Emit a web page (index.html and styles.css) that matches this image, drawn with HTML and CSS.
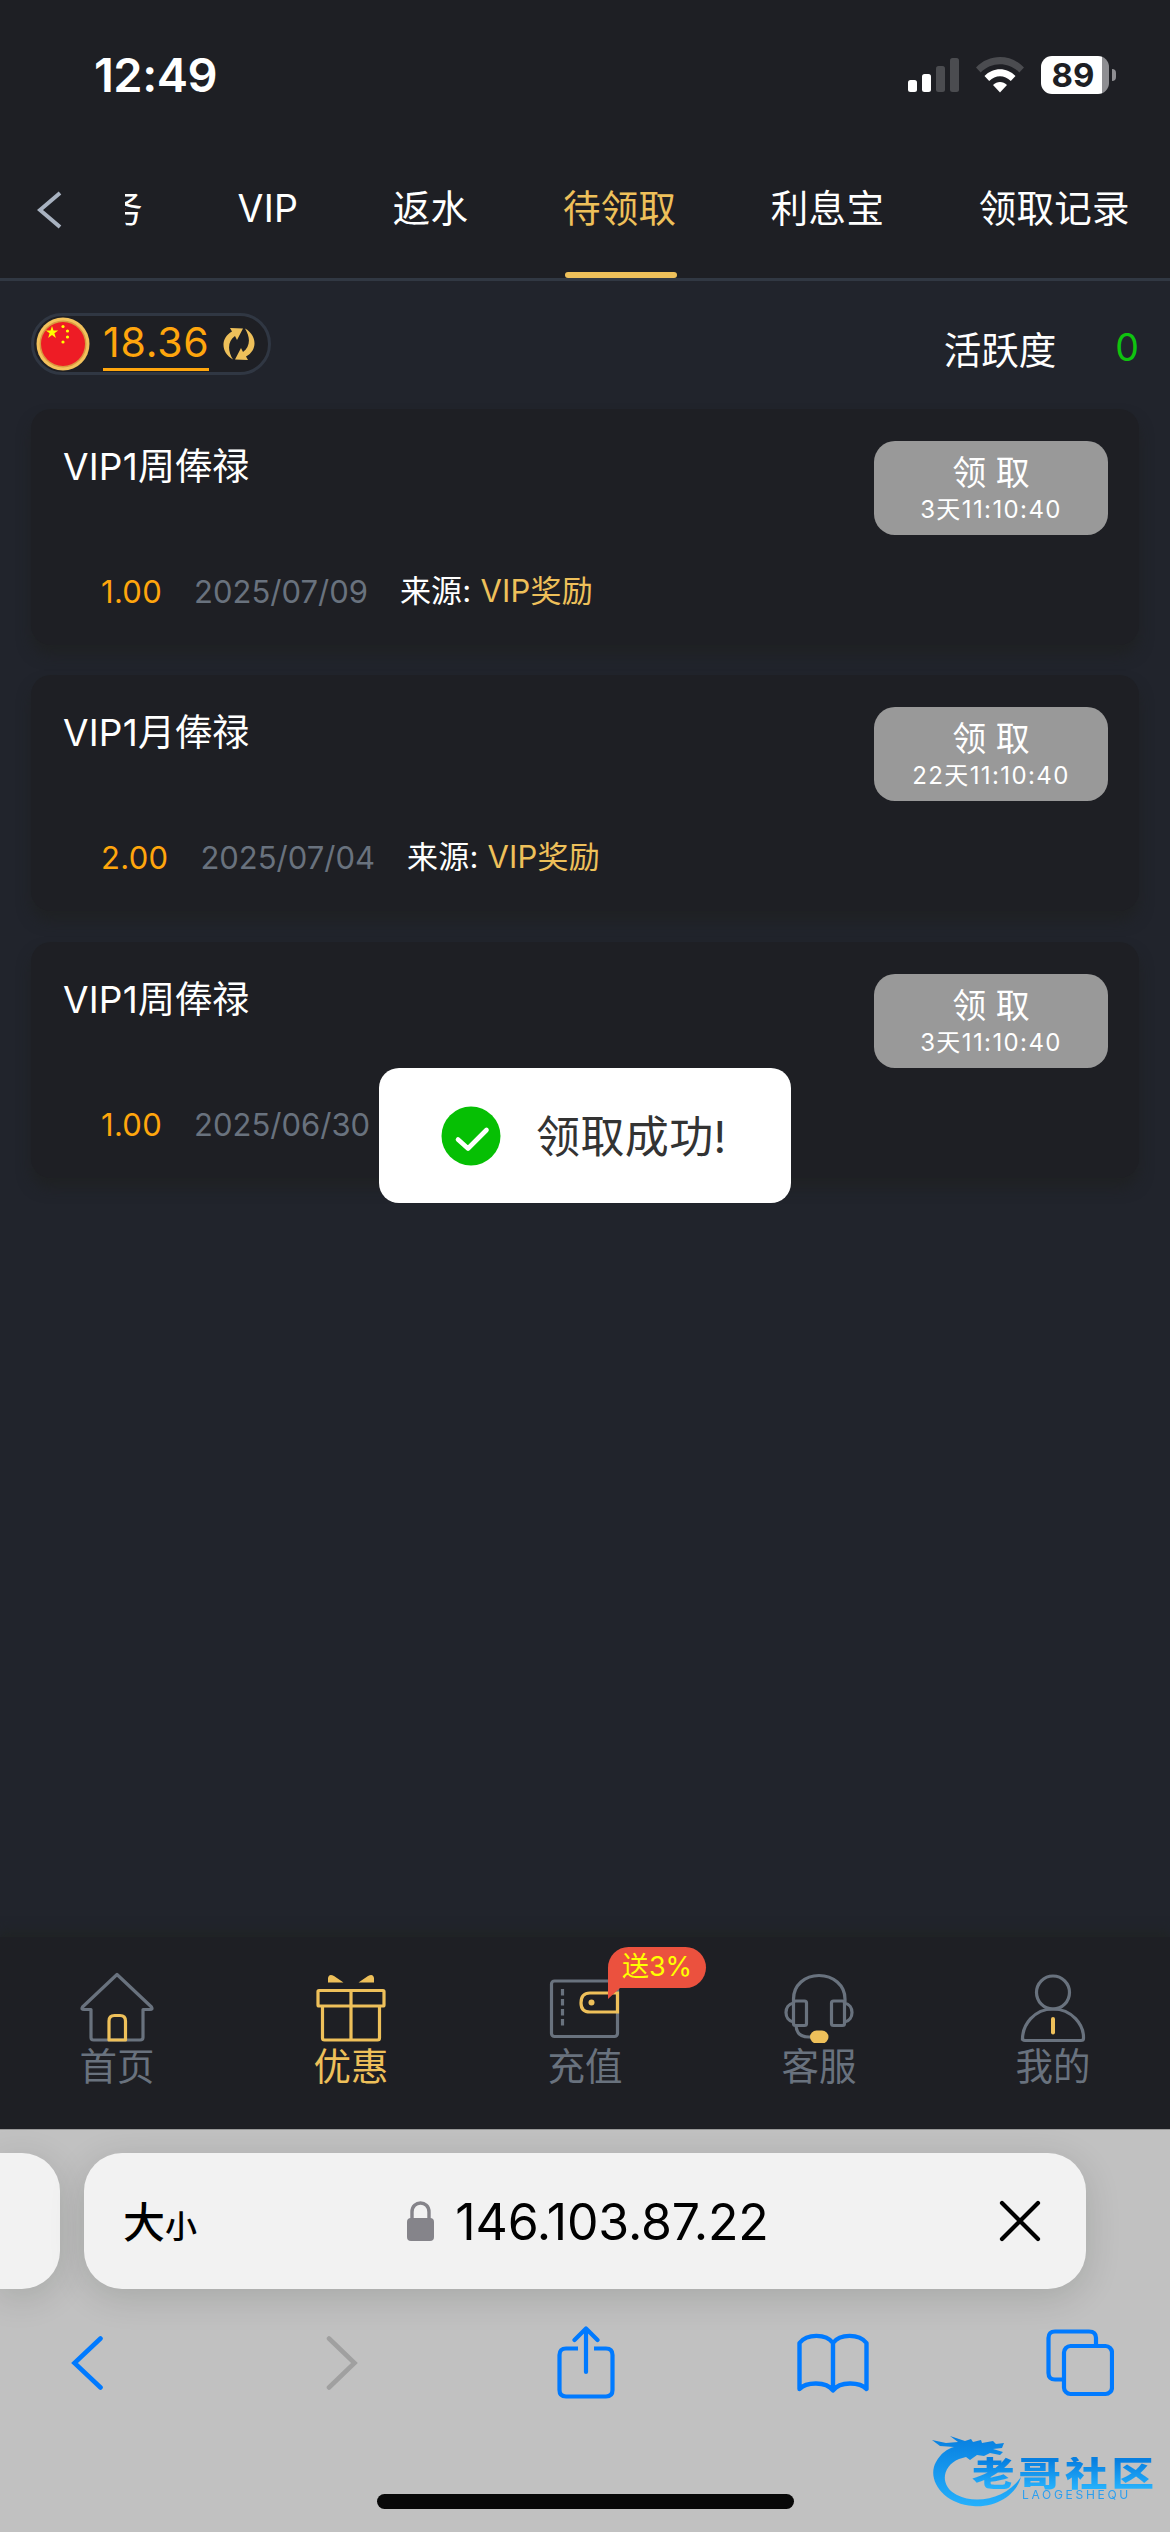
FILE: index.html
```html
<!DOCTYPE html>
<html lang="zh-CN">
<head>
<meta charset="utf-8">
<title>待领取</title>
<link rel="stylesheet" href="styles.css">
</head>
<body>
<div class="phone">
  <header class="status">
    <span class="clock">12:49</span>
    <div class="status-icons">
      <svg width="51" height="34" viewBox="0 0 51 34"><g fill="#fff"><rect x="0" y="22" width="9" height="12" rx="2.5"/><rect x="14" y="16" width="9" height="18" rx="2.5"/></g><g fill="#4b4c50"><rect x="28" y="8" width="9" height="26" rx="2.5"/><rect x="42" y="0" width="9" height="34" rx="2.5"/></g></svg>
      <svg class="wifi" width="48" height="36" viewBox="0 0 48 36"><path d="M0 10.500C13-3.500 35-3.500 48 10.500L43.300 15.500C32.500 4.500 15.500 4.500 4.700 15.500Z" fill="#4b4c50"/><path d="M8.500 19C17 10 31 10 39.500 19L34.800 24C28.500 17.500 19.500 17.500 13.200 24Z" fill="#fff"/><path d="M17 28C21 24 27 24 31 28L24 35.500Z" fill="#fff"/></svg>
      <div class="battery"><span>89</span></div><i class="nub"></i>
    </div>
  </header>

  <nav class="tabs">
    <svg class="back" width="25" height="38" viewBox="0 0 25 38"><path d="M23 2L3 19L23 36" fill="none" stroke="#a8b2c0" stroke-width="4"/></svg>
    <div class="tab-list">
      <span class="tab cut"><b>务</b></span>
      <span class="tab">VIP</span>
      <span class="tab">返水</span>
      <span class="tab active">待领取</span>
      <span class="tab">利息宝</span>
      <span class="tab">领取记录</span>
    </div>
  </nav>

  <main class="content">
    <div class="summary">
      <div class="wallet">
        <svg width="54" height="54" viewBox="0 0 54 54"><circle cx="27" cy="27" r="26.500" fill="#f3c25c"/><circle cx="27" cy="27" r="23.500" fill="#d9993f"/><circle cx="27" cy="27" r="22" fill="#ee1c25"/><g fill="#ff0"><path d="M16 9l1.500 4.500h4.700l-3.800 2.800 1.500 4.600-3.900-2.800-3.900 2.800 1.500-4.600-3.800-2.800h4.700z"/><circle cx="27" cy="9.500" r="1.600"/><circle cx="31.500" cy="14" r="1.600"/><circle cx="31.500" cy="20" r="1.600"/><circle cx="27" cy="25" r="1.600"/></g></svg>
        <span class="balance">18.36</span>
        <svg class="refresh" width="32" height="34" viewBox="0 0 32 34"><g fill="#eec05a"><path d="M7 1L20 1.500L14 13L12 9C5 14 4 23 10 32.500C-2 26-3 11 9 4.500Z"/><path d="M25 33L12 32.500L18 21L20 25C27 20 28 11 22 1.500C34 8 35 23 23 29.500Z"/></g></svg>
      </div>
      <div class="activity"><span>活跃度</span><em>0</em></div>
    </div>

    <section class="card">
      <div class="top"><h2>VIP1周俸禄</h2><div class="claim"><span>领 取</span><small>3天11:10:40</small></div></div>
      <div class="meta"><span class="amount">1.00</span><span class="date">2025/07/09</span><span class="source">来源: <em>VIP奖励</em></span></div>
    </section>
    <section class="card">
      <div class="top"><h2>VIP1月俸禄</h2><div class="claim"><span>领 取</span><small>22天11:10:40</small></div></div>
      <div class="meta"><span class="amount">2.00</span><span class="date">2025/07/04</span><span class="source">来源: <em>VIP奖励</em></span></div>
    </section>
    <section class="card">
      <div class="top"><h2>VIP1周俸禄</h2><div class="claim"><span>领 取</span><small>3天11:10:40</small></div></div>
      <div class="meta"><span class="amount">1.00</span><span class="date">2025/06/30</span></div>
    </section>
  </main>

  <nav class="bottom-nav">
    <div class="item"><svg width="76" height="72" viewBox="0 0 76 72" fill="none" stroke="#69727e" stroke-width="3.200" stroke-linejoin="round"><path d="M38 3.500L3.500 36Q2 38.500 5 38.500H12V66.500Q12 69 14.500 69H61Q64 69 64 66.500V38.500H71Q74 38.500 72.500 36Z"/><path d="M30 69V50Q30 44.500 35.500 44.500H41Q46.500 44.500 46.500 50V69Z" stroke="#eec05a"/></svg><span>首页</span></div>
    <div class="item on"><svg width="76" height="72" viewBox="0 0 76 72" fill="none" stroke="#eec05a" stroke-width="3.200" stroke-linejoin="round"><rect x="5" y="19.500" width="66" height="15.500" rx="1"/><path d="M9.500 35V67Q9.500 69 11.500 69H64.500Q66.500 69 66.500 67V35M38 19.500V69"/><path d="M15 11.500V7Q16 2 21 5L30.500 11.500ZM61 11.500V7Q60 2 55 5L45.500 11.500Z" fill="#eec05a" stroke="none"/></svg><span>优惠</span></div>
    <div class="item"><svg width="76" height="72" viewBox="0 0 76 72" fill="none" stroke="#69727e" stroke-width="3.200"><rect x="4.500" y="10" width="66" height="55.500" rx="3"/><path d="M15.500 18v6.500M15.500 28v6.500M15.500 38v6.500M15.500 48v6.500"/><path d="M70.500 22H43Q34 22 34 32Q34 41 43 41H70.500Z" stroke="#eec05a"/><circle cx="44.500" cy="31.500" r="3" fill="#eec05a" stroke="none"/></svg><span>充值</span>
      <div class="badge"><svg width="12" height="12" viewBox="0 0 12 12"><path d="M0 0H12V1L0 12Z" fill="#eb513e"/></svg>送3%</div></div>
    <div class="item"><svg width="76" height="72" viewBox="0 0 76 72" fill="none" stroke="#69727e" stroke-width="3.200"><path d="M12.500 31V28C12.500 14 24 4.500 38 4.500S64 14 64 28V31"/><rect x="12.500" y="30" width="13" height="24.500" rx="2"/><rect x="50.500" y="30" width="13" height="24.500" rx="2"/><path d="M12.500 32C2.500 34 2.500 49 12.500 51M63.500 32C73.500 34 73.500 49 63.500 51M15 54.500Q15.500 66 28 66H31"/><rect x="29" y="59.500" width="18.500" height="13" rx="6.500" fill="#eec05a" stroke="none"/></svg><span>客服</span></div>
    <div class="item"><svg width="76" height="72" viewBox="0 0 76 72" fill="none" stroke="#69727e" stroke-width="3.200"><ellipse cx="38" cy="21.500" rx="16.500" ry="16.500"/><path d="M7.500 69.500C7 54 19 38 38 38S69 54 68.500 67.500Q68.500 69.500 66 69.500H10Q7.500 69.500 7.500 67Z"/><path d="M38 48V61.500" stroke="#eec05a" stroke-width="4" stroke-linecap="round"/></svg><span>我的</span></div>
  </nav>

  <footer class="browser">
    <div class="bars">
      <div class="bar-prev"></div>
      <div class="address">
        <span class="size"><b>大</b><i>小</i></span>
        <div class="host"><svg width="28" height="40" viewBox="0 0 28 40"><rect x="0" y="17" width="27" height="23" rx="4" fill="#85848a"/><path d="M5 18V11C5 -1 22 -1 22 11V18" fill="none" stroke="#85848a" stroke-width="3.400"/></svg><span>146.103.87.22</span></div>
        <svg class="stop" width="42" height="42" viewBox="0 0 42 42"><path d="M3 3L39 39M39 3L3 39" stroke="#000" stroke-width="4.200" stroke-linecap="round"/></svg>
      </div>
    </div>
    <div class="tools">
      <svg width="32" height="56" viewBox="0 0 32 56"><path d="M29.500 3.500L3.500 28L29.500 52.500" fill="none" stroke="#007aff" stroke-width="4.600" stroke-linecap="round"/></svg>
      <svg class="forward" width="32" height="56" viewBox="0 0 32 56"><path d="M3 3.500L28.500 28L3 52.500" fill="none" stroke="#a0a0a0" stroke-width="4.600" stroke-linecap="round"/></svg>
      <svg class="share" width="58" height="74" viewBox="0 0 58 74" fill="none" stroke="#007aff" stroke-width="4.200"><path d="M21 22.500H9Q2.500 22.500 2.500 29V64Q2.500 70.500 9 70.500H49Q55.500 70.500 55.500 64V29Q55.500 22.500 49 22.500H37"/><path d="M29 46V3M17.500 14L29 2.500L40.500 14" stroke-linecap="round" stroke-linejoin="round"/></svg>
      <svg class="book" width="72" height="60" viewBox="0 0 72 60" fill="none" stroke="#007aff" stroke-width="4.400" stroke-linejoin="round"><path d="M36 10C29 .5 10 .5 2.500 10V56C9 49 29 48 36 57.500C43 48 63 49 69.500 56V10C62 .5 43 .5 36 10ZV57.500"/></svg>
      <svg class="pages" width="68" height="68" viewBox="0 0 68 68" fill="none" stroke="#007aff" stroke-width="4.200"><rect x="18" y="17" width="48" height="48" rx="6.500"/><path d="M18 50.500H9Q2.500 50.500 2.500 44V9Q2.500 2.500 9 2.500H43Q50 2.500 50 9V16"/></svg>
    </div>
    <div class="indicator"></div>
  </footer>

  <div class="toast">
    <svg width="60" height="60" viewBox="0 0 60 60"><circle cx="30" cy="30" r="29.500" fill="#06bf04"/><path d="M17 33.500L27 42.500L45.500 24" fill="none" stroke="#fff" stroke-width="4.600" stroke-linecap="round" stroke-linejoin="round"/></svg>
    <span>领取成功!</span>
  </div>

  <div class="watermark">
    <svg width="92" height="76" viewBox="0 0 92 76"><defs><linearGradient id="blue" x1="0" y1="0" x2="0" y2="1"><stop offset="0" stop-color="#077fe0"/><stop offset="1" stop-color="#25b0fc"/></linearGradient></defs><path fill="url(#blue)" d="M0 8L14 11L26 10L18 4L33 9L39 7L41 10L49 8L50 11L61 9L64 12L72 11L70 16L61 17L71 20L68 23L58 21L52 24L45 23L38 28L34 25L27 27C10 34 7 54 25 63C45 73 75 66 89 45C84 64 62 76 41 74C12 72 -6 48 4 30C9 21 15 17 22 15L8 14Z"/></svg>
    <div class="mark"><strong>老哥社区</strong><span>LAOGESHEQU</span></div>
  </div>
</div>
</body>
</html>
```
FILE: styles.css
```css
* { box-sizing: border-box; }
body { margin: 0; background: #1e1f24; }
em, i { font-style: normal; }
svg { display: block; flex: none; }

.phone {
  position: relative;
  width: 1170px;
  height: 2532px;
  overflow: hidden;
  display: flex;
  flex-direction: column;
  background: #21242c;
  color: #fff;
  font-family: Inter, "Noto Sans CJK SC", sans-serif;
  font-weight: 400;
  white-space: nowrap;
}

/* status bar */
.status {
  height: 141px;
  padding: 8px 54px 0 94px;
  display: flex;
  align-items: center;
  justify-content: space-between;
  background: #1e1f24;
}
.clock { font-size: 47px; font-weight: 600; line-height: 60px; letter-spacing: -.5px; }
.status-icons { display: flex; align-items: center; }
.wifi { margin-left: 17px; }
.battery {
  width: 68px;
  height: 38px;
  margin-left: 17px;
  padding-right: 4px;
  border-radius: 11px;
  background: linear-gradient(90deg, #fff 61px, #8e8e92 61px);
  color: #1e1f24;
  font-size: 33px;
  font-weight: 700;
  line-height: 38px;
  text-align: center;
}
.nub { width: 4px; height: 12px; margin: 0 0 0 3px; border-radius: 0 5px 5px 0; background: #8e8e92; }

/* top tabs */
.tabs {
  height: 140px;
  flex: none;
  display: flex;
  align-items: stretch;
  padding-left: 37px;
  background: #1e1f24;
  border-bottom: 3px solid #313843;
}
.back { align-self: center; margin-right: 63px; }
.tab-list { display: flex; gap: 94.500px; overflow: hidden; }
.tab {
  position: relative;
  flex: none;
  display: flex;
  align-items: center;
  border-bottom: 6px solid transparent;
  font-size: 37.500px;
  line-height: 46px;
  letter-spacing: .3px;
  padding-top: 4px;
}
.tab.active { color: #eec05a; }
.tab.active::after {
  content: "";
  position: absolute;
  left: 2px;
  right: -1px;
  bottom: -6px;
  height: 6px;
  border-radius: 3px;
  background: #eec05a;
}
.tab.cut { width: 18px; overflow: hidden; justify-content: flex-end; }
.tab.cut b { font-weight: inherit; }

/* content */
.content { height: 1656px; padding: 32px 31px 0; display: flex; flex-direction: column; gap: 30.500px; }
.summary { display: flex; justify-content: space-between; height: 65px; }
.wallet {
  width: 240px;
  height: 62px;
  display: flex;
  align-items: center;
  padding-left: 2px;
  border: 3px solid #303743;
  border-radius: 31px;
  background: #1e1f24;
}
.balance {
  width: 106px;
  margin: 2px 14px 0 13px;
  height: 52px;
  line-height: 46px;
  border-bottom: 3px solid #ffa60d;
  color: #ffa60d;
  font-size: 41px;
  letter-spacing: .8px;
}
.activity { display: flex; margin: 13px 0 0; font-size: 37.500px; line-height: 50px; }
.activity em { margin: -3px 0 0 59px; color: #0fc30f; }

.card {
  height: 236px;
  padding: 32px 31px 0 32px;
  border-radius: 20px;
  background: #1e1f24;
  box-shadow: 0 10px 14px rgba(30, 32, 30, .6);
}
.top { display: flex; justify-content: space-between; height: 120px; }
h2 { margin: 0; font-size: 37px; font-weight: 400; line-height: 52px; letter-spacing: .2px; }
.claim {
  width: 234px;
  height: 94px;
  padding-top: 9px;
  border-radius: 21px;
  background: #999;
  text-align: center;
}
.claim span, .claim small { display: block; }
.claim span { font-size: 34px; line-height: 46px; }
.claim small { font-size: 24px; line-height: 28px; letter-spacing: 1.400px; }
.meta { display: flex; gap: 32px; padding-left: 38px; font-size: 31px; line-height: 60px; }
.amount { color: #ffa60d; letter-spacing: .3px; }
.date { color: #69727e; }
.amount, .date { padding-top: 1px; }
.source { letter-spacing: .2px; }
.source em { color: #eec05a; }

/* bottom navigation */
.bottom-nav {
  height: 192px;
  flex: none;
  display: flex;
  background: #1e1f24;
  box-shadow: 0 -6px 10px rgba(32, 35, 36, .9);
}
.item {
  position: relative;
  width: 234px;
  padding-top: 34px;
  display: flex;
  flex-direction: column;
  align-items: center;
  color: #69727e;
  font-size: 37.500px;
  line-height: 44px;
}
.item span { margin-top: 2px; }
.on { color: #eec05a; }
.badge {
  position: absolute;
  left: 140px;
  top: 10px;
  width: 98px;
  height: 41px;
  border-radius: 21px 21px 21px 0;
  background: #eb513e;
  color: #ff0;
  font-size: 27px;
  line-height: 39px;
  text-align: center;
}
.badge svg { position: absolute; left: 0; top: 40px; }

/* browser chrome */
.browser { height: 403px; flex: none; background: #c1c1c1; color: #000; border-top: 1px solid #999; }
.bars { display: flex; gap: 24px; padding-top: 23px; }
.bar-prev { width: 60px; height: 136px; border-radius: 0 38px 38px 0; background: #f2f2f2; box-shadow: 0 8px 36px rgba(0, 20, 10, .14); }
.address {
  width: 1002px;
  height: 136px;
  padding: 0 45px 0 39px;
  display: grid;
  grid-template-columns: 1fr auto 1fr;
  align-items: center;
  border-radius: 38px;
  background: #f2f2f2;
  box-shadow: 0 8px 36px rgba(0, 20, 10, .14);
}
.size { display: flex; align-items: baseline; padding-bottom: 4px; font-weight: 500; }
.size b { font-size: 42px; font-weight: 500; }
.size i { font-size: 32px; }
.host { display: flex; align-items: center; gap: 20px; padding-left: 12px; font-size: 50px; letter-spacing: -.15px; }
.host span { padding-top: 2px; }
.stop { justify-self: end; }
.tools { display: flex; align-items: center; height: 76px; margin: 36px 0 0 71px; }
.forward { margin-left: 223px; }
.share { margin-left: 199px; }
.book { margin-left: 182px; }
.pages { margin-left: 177px; }
.indicator { width: 417px; height: 15px; margin: 93px 0 0 377px; border-radius: 8px; background: #080808; }

/* overlays */
.toast {
  position: absolute;
  left: 379px;
  top: 1068px;
  width: 412px;
  height: 135px;
  padding-left: 62px;
  display: flex;
  align-items: center;
  border-radius: 20px;
  background: #fff;
  color: #333;
  font-size: 44px;
  letter-spacing: .4px;
}
.toast span { margin: -3px 0 0 35px; }
.watermark { position: absolute; left: 932px; top: 2432px; display: flex; filter: blur(.6px); }
.mark { margin: 25px 0 0 -52px; display: flex; flex-direction: column; }
.mark strong {
  align-self: flex-start;
  font-size: 34px;
  font-weight: 900;
  line-height: 34px;
  letter-spacing: 3.200px;
  background: linear-gradient(#077fe0 10%, #25b0fc 90%);
  -webkit-background-clip: text;
  background-clip: text;
  color: transparent;
  transform: scaleX(1.25);
  transform-origin: 0 50%;
}
.mark span { margin: -2px 0 0 50px; color: #2b9ff0; font-size: 12px; line-height: 12px; letter-spacing: 2.700px; }
```
